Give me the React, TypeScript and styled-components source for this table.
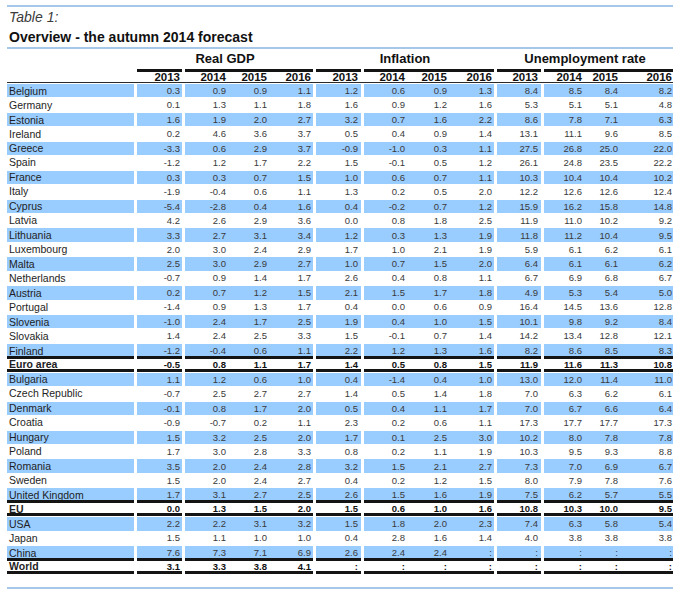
import React from 'react';
import styled, { createGlobalStyle, css } from 'styled-components';

const Global = createGlobalStyle`
  html, body { margin: 0; padding: 0; background: #ffffff; }
  body { font-family: "Liberation Sans", Arial, sans-serif; }
`;

type Tone = 'blue' | 'plain' | 'total';

const LABEL_W = 127;
const ROW_H = 14.45;

const GROUPS: { w: number; cols: { w: number; pad: number }[] }[] = [
  { w: 45, cols: [{ w: 45, pad: 2 }] },
  { w: 128, cols: [{ w: 43, pad: 2 }, { w: 42, pad: 3 }, { w: 43, pad: 2 }] },
  { w: 45, cols: [{ w: 45, pad: 3 }] },
  { w: 130, cols: [{ w: 44, pad: 3 }, { w: 42, pad: 3 }, { w: 44, pad: 2 }] },
  { w: 44, cols: [{ w: 44, pad: 3 }] },
  { w: 129, cols: [{ w: 40, pad: 2 }, { w: 36, pad: 2 }, { w: 53, pad: 1 }] },
];

const YEARS = ['2013', '2014', '2015', '2016', '2013', '2014', '2015', '2016', '2013', '2014', '2015', '2016'];

const DATA: [string, string[], Tone][] = [
  ['Belgium', ['0.3', '0.9', '0.9', '1.1', '1.2', '0.6', '0.9', '1.3', '8.4', '8.5', '8.4', '8.2'], 'blue'],
  ['Germany', ['0.1', '1.3', '1.1', '1.8', '1.6', '0.9', '1.2', '1.6', '5.3', '5.1', '5.1', '4.8'], 'plain'],
  ['Estonia', ['1.6', '1.9', '2.0', '2.7', '3.2', '0.7', '1.6', '2.2', '8.6', '7.8', '7.1', '6.3'], 'blue'],
  ['Ireland', ['0.2', '4.6', '3.6', '3.7', '0.5', '0.4', '0.9', '1.4', '13.1', '11.1', '9.6', '8.5'], 'plain'],
  ['Greece', ['-3.3', '0.6', '2.9', '3.7', '-0.9', '-1.0', '0.3', '1.1', '27.5', '26.8', '25.0', '22.0'], 'blue'],
  ['Spain', ['-1.2', '1.2', '1.7', '2.2', '1.5', '-0.1', '0.5', '1.2', '26.1', '24.8', '23.5', '22.2'], 'plain'],
  ['France', ['0.3', '0.3', '0.7', '1.5', '1.0', '0.6', '0.7', '1.1', '10.3', '10.4', '10.4', '10.2'], 'blue'],
  ['Italy', ['-1.9', '-0.4', '0.6', '1.1', '1.3', '0.2', '0.5', '2.0', '12.2', '12.6', '12.6', '12.4'], 'plain'],
  ['Cyprus', ['-5.4', '-2.8', '0.4', '1.6', '0.4', '-0.2', '0.7', '1.2', '15.9', '16.2', '15.8', '14.8'], 'blue'],
  ['Latvia', ['4.2', '2.6', '2.9', '3.6', '0.0', '0.8', '1.8', '2.5', '11.9', '11.0', '10.2', '9.2'], 'plain'],
  ['Lithuania', ['3.3', '2.7', '3.1', '3.4', '1.2', '0.3', '1.3', '1.9', '11.8', '11.2', '10.4', '9.5'], 'blue'],
  ['Luxembourg', ['2.0', '3.0', '2.4', '2.9', '1.7', '1.0', '2.1', '1.9', '5.9', '6.1', '6.2', '6.1'], 'plain'],
  ['Malta', ['2.5', '3.0', '2.9', '2.7', '1.0', '0.7', '1.5', '2.0', '6.4', '6.1', '6.1', '6.2'], 'blue'],
  ['Netherlands', ['-0.7', '0.9', '1.4', '1.7', '2.6', '0.4', '0.8', '1.1', '6.7', '6.9', '6.8', '6.7'], 'plain'],
  ['Austria', ['0.2', '0.7', '1.2', '1.5', '2.1', '1.5', '1.7', '1.8', '4.9', '5.3', '5.4', '5.0'], 'blue'],
  ['Portugal', ['-1.4', '0.9', '1.3', '1.7', '0.4', '0.0', '0.6', '0.9', '16.4', '14.5', '13.6', '12.8'], 'plain'],
  ['Slovenia', ['-1.0', '2.4', '1.7', '2.5', '1.9', '0.4', '1.0', '1.5', '10.1', '9.8', '9.2', '8.4'], 'blue'],
  ['Slovakia', ['1.4', '2.4', '2.5', '3.3', '1.5', '-0.1', '0.7', '1.4', '14.2', '13.4', '12.8', '12.1'], 'plain'],
  ['Finland', ['-1.2', '-0.4', '0.6', '1.1', '2.2', '1.2', '1.3', '1.6', '8.2', '8.6', '8.5', '8.3'], 'blue'],
  ['Euro area', ['-0.5', '0.8', '1.1', '1.7', '1.4', '0.5', '0.8', '1.5', '11.9', '11.6', '11.3', '10.8'], 'total'],
  ['Bulgaria', ['1.1', '1.2', '0.6', '1.0', '0.4', '-1.4', '0.4', '1.0', '13.0', '12.0', '11.4', '11.0'], 'blue'],
  ['Czech Republic', ['-0.7', '2.5', '2.7', '2.7', '1.4', '0.5', '1.4', '1.8', '7.0', '6.3', '6.2', '6.1'], 'plain'],
  ['Denmark', ['-0.1', '0.8', '1.7', '2.0', '0.5', '0.4', '1.1', '1.7', '7.0', '6.7', '6.6', '6.4'], 'blue'],
  ['Croatia', ['-0.9', '-0.7', '0.2', '1.1', '2.3', '0.2', '0.6', '1.1', '17.3', '17.7', '17.7', '17.3'], 'plain'],
  ['Hungary', ['1.5', '3.2', '2.5', '2.0', '1.7', '0.1', '2.5', '3.0', '10.2', '8.0', '7.8', '7.8'], 'blue'],
  ['Poland', ['1.7', '3.0', '2.8', '3.3', '0.8', '0.2', '1.1', '1.9', '10.3', '9.5', '9.3', '8.8'], 'plain'],
  ['Romania', ['3.5', '2.0', '2.4', '2.8', '3.2', '1.5', '2.1', '2.7', '7.3', '7.0', '6.9', '6.7'], 'blue'],
  ['Sweden', ['1.5', '2.0', '2.4', '2.7', '0.4', '0.2', '1.2', '1.5', '8.0', '7.9', '7.8', '7.6'], 'plain'],
  ['United Kingdom', ['1.7', '3.1', '2.7', '2.5', '2.6', '1.5', '1.6', '1.9', '7.5', '6.2', '5.7', '5.5'], 'blue'],
  ['EU', ['0.0', '1.3', '1.5', '2.0', '1.5', '0.6', '1.0', '1.6', '10.8', '10.3', '10.0', '9.5'], 'total'],
  ['USA', ['2.2', '2.2', '3.1', '3.2', '1.5', '1.8', '2.0', '2.3', '7.4', '6.3', '5.8', '5.4'], 'blue'],
  ['Japan', ['1.5', '1.1', '1.0', '1.0', '0.4', '2.8', '1.6', '1.4', '4.0', '3.8', '3.8', '3.8'], 'plain'],
  ['China', ['7.6', '7.3', '7.1', '6.9', '2.6', '2.4', '2.4', ':', ':', ':', ':', ':'], 'blue'],
  ['World', ['3.1', '3.3', '3.8', '4.1', ':', ':', ':', ':', ':', ':', ':', ':'], 'total'],
];

const Page = styled.div`
  width: 680px;
  height: 594px;
  box-sizing: border-box;
  padding: 5px 7px 0 7px;
  display: flex;
  flex-direction: column;
  overflow: hidden;
`;

const Rule = styled.div<{ $space?: number }>`
  height: 2px;
  flex: none;
  margin-top: ${(p) => p.$space ?? 0}px;
  background: #a4c7ea;
`;

const Caption = styled.div`
  margin-top: 2px;
  padding-left: 2px;
  font-style: italic;
  font-size: 14px;
  line-height: 16px;
  color: #3c3c3c;
`;

const Title = styled.h1`
  margin: 4px 0 2px;
  padding-left: 2px;
  font-size: 14px;
  line-height: 16px;
  font-weight: bold;
  color: #111;
`;

const Line = styled.div<{ $h: number; $top?: number }>`
  display: flex;
  gap: 3px;
  flex: none;
  height: ${(p) => p.$h}px;
  margin-top: ${(p) => p.$top ?? 0}px;
`;

const Spacer = styled.div`
  width: ${LABEL_W}px;
  flex: none;
`;

const GroupHead = styled.div<{ $w: number }>`
  width: ${(p) => p.$w}px;
  flex: none;
  text-align: center;
  font-size: 13px;
  line-height: 15px;
  font-weight: bold;
  color: #111;
`;

const Bar = styled.div<{ $w: number }>`
  width: ${(p) => p.$w}px;
  flex: none;
  background: #141414;
`;

const HeaderRule = styled.div`
  height: 1px;
  flex: none;
  background: #2a2a2a;
`;

const Seg = styled.div<{ $w: number; $tone: Tone }>`
  width: ${(p) => p.$w}px;
  flex: none;
  display: flex;
  box-sizing: border-box;
  align-items: center;
  ${(p) =>
    p.$tone === 'blue' &&
    css`
      margin-top: 1px;
      height: calc(100% - 1px);
      background: #99ccff;
    `}
  ${(p) =>
    p.$tone === 'total' &&
    css`
      margin-top: -1.5px;
      height: calc(100% + 1.5px);
      border-top: 3px solid #141414;
      border-bottom: 3px solid #141414;
      padding-top: 1px;
    `}
`;

const Label = styled.span<{ $bold: boolean }>`
  padding-left: 2px;
  font-size: 10.5px;
  font-weight: ${(p) => (p.$bold ? 'bold' : 'normal')};
  color: #1e1e24;
  white-space: nowrap;
`;

const Num = styled.span<{ $w: number; $pad: number; $bold: boolean }>`
  width: ${(p) => p.$w}px;
  flex: none;
  box-sizing: border-box;
  padding-right: ${(p) => p.$pad}px;
  text-align: right;
  font-size: 9.5px;
  font-weight: ${(p) => (p.$bold ? 'bold' : 'normal')};
  color: ${(p) => (p.$bold ? '#111' : '#3a3a3a')};
  white-space: nowrap;
`;

const Year = styled.span<{ $w: number; $pad: number }>`
  width: ${(p) => p.$w}px;
  flex: none;
  box-sizing: border-box;
  padding-right: ${(p) => p.$pad}px;
  text-align: right;
  font-size: 11.5px;
  line-height: 10px;
  font-weight: bold;
  color: #111;
`;

const YearSeg = styled.div<{ $w: number }>`
  width: ${(p) => p.$w}px;
  flex: none;
  display: flex;
`;

function splitValues(values: string[]): string[][] {
  return [
    [values[0]],
    values.slice(1, 4),
    [values[4]],
    values.slice(5, 8),
    [values[8]],
    values.slice(9, 12),
  ];
}

const DataRow: React.FC<{ label: string; values: string[]; tone: Tone }> = ({ label, values, tone }) => {
  const bold = tone === 'total';
  const parts = splitValues(values);
  return (
    <Line $h={ROW_H}>
      <Seg $w={LABEL_W} $tone={tone}>
        <Label $bold={bold}>{label}</Label>
      </Seg>
      {GROUPS.map((g, gi) => (
        <Seg key={gi} $w={g.w} $tone={tone}>
          {g.cols.map((c, ci) => (
            <Num key={ci} $w={c.w} $pad={c.pad} $bold={bold}>
              {parts[gi][ci]}
            </Num>
          ))}
        </Seg>
      ))}
    </Line>
  );
};

export default function App() {
  const yearParts = splitValues(YEARS);
  return (
    <>
      <Global />
      <Page>
        <Rule />
        <Caption>Table 1:</Caption>
        <Title>Overview - the autumn 2014 forecast</Title>
        <Rule />
        <Line $h={15} $top={2}>
          <Spacer />
          <GroupHead $w={GROUPS[0].w + 3 + GROUPS[1].w}>Real GDP</GroupHead>
          <GroupHead $w={GROUPS[2].w + 3 + GROUPS[3].w}>Inflation</GroupHead>
          <GroupHead $w={GROUPS[4].w + 3 + GROUPS[5].w}>Unemployment rate</GroupHead>
        </Line>
        <Line $h={3} $top={3}>
          <Spacer />
          {GROUPS.map((g, i) => (
            <Bar key={i} $w={g.w} />
          ))}
        </Line>
        <Line $h={10}>
          <Spacer />
          {GROUPS.map((g, gi) => (
            <YearSeg key={gi} $w={g.w}>
              {g.cols.map((c, ci) => (
                <Year key={ci} $w={c.w} $pad={c.pad}>
                  {yearParts[gi][ci]}
                </Year>
              ))}
            </YearSeg>
          ))}
        </Line>
        <HeaderRule />
        {DATA.map(([label, values, tone]) => (
          <DataRow key={label} label={label} values={values} tone={tone} />
        ))}
        <Rule $space={12.7} />
      </Page>
    </>
  );
}
